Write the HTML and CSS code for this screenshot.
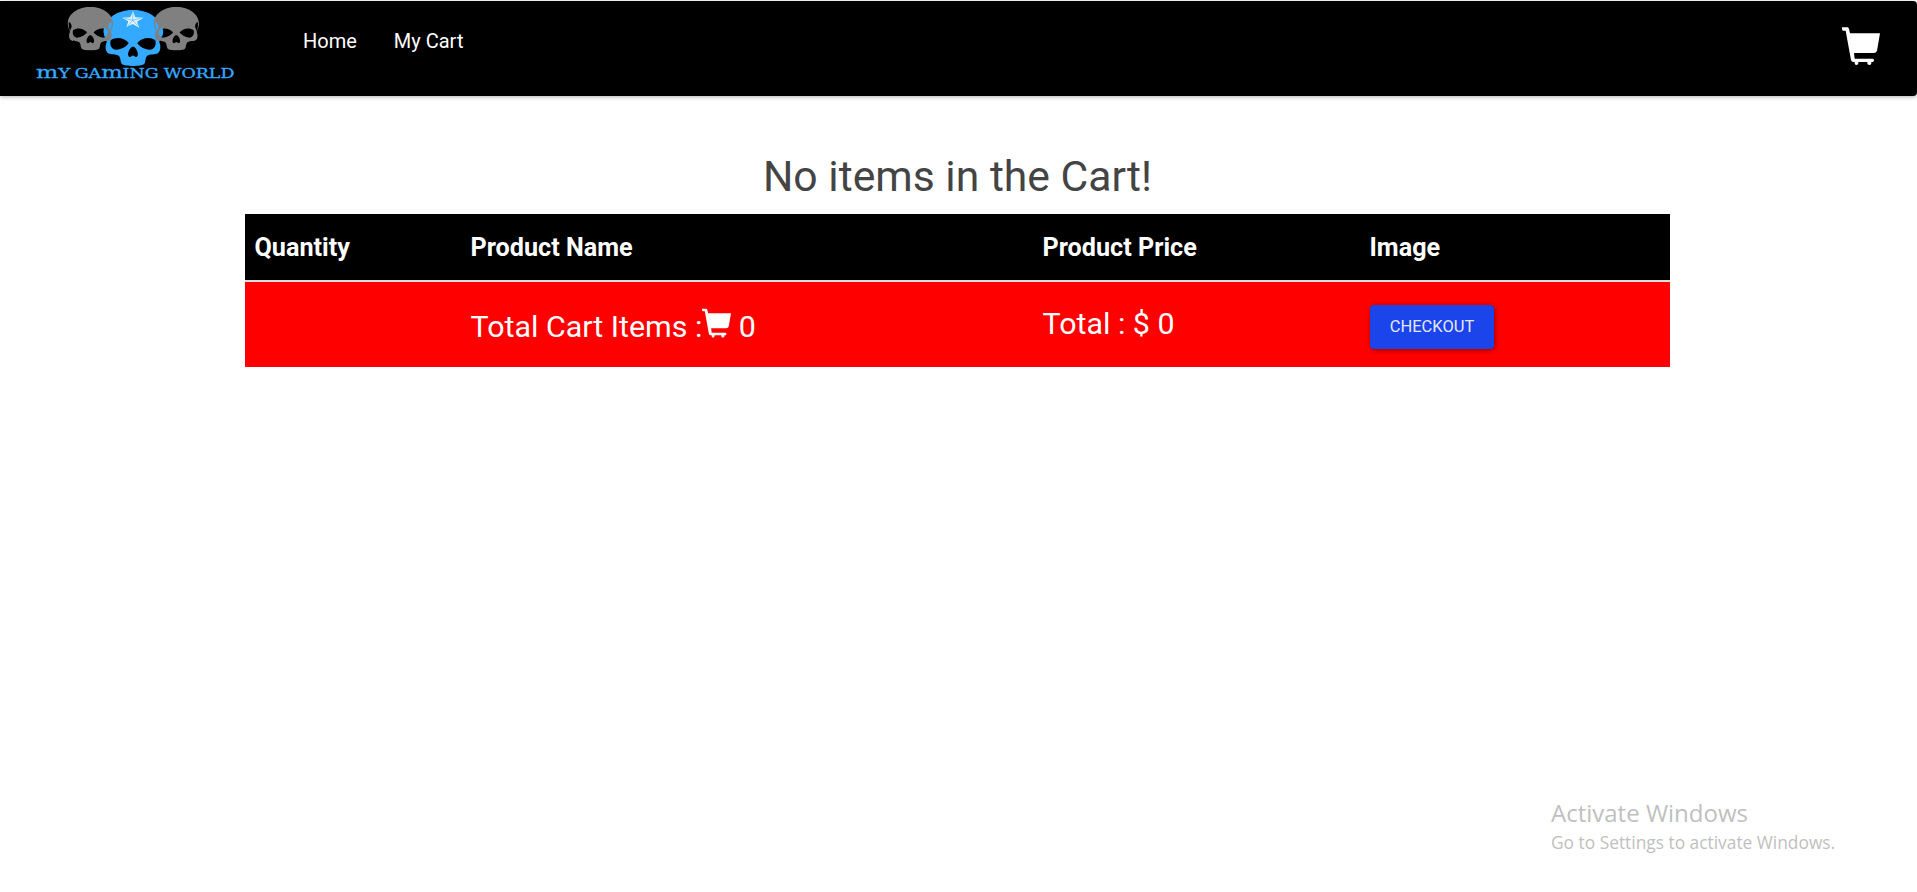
FILE: index.html
```
<!DOCTYPE html>
<html lang="en">
<head>
<meta charset="utf-8">
<title>My Gaming World</title>
<link rel="stylesheet" href="styles.css">
</head>
<body>
<svg class="defs" aria-hidden="true">
  <symbol id="cart" viewBox="0 0 114 114">
    <path d="M0 1 H16 Q20 1 21 6 L24 19 H114 L105 71 Q103 78 95 78 H36 L38 95 H92 Q96 95 96 100 Q96 105 92 105 H88 V109 Q88 114 82 114 Q76 114 76 109 V105 H49 V109 Q49 114 43 114 Q38 114 38 109 V105 H33 Q28 104 27 99 L11 11 H3 Q0 10 0 5 Z"/>
  </symbol>
  <symbol id="skull" viewBox="0 0 138 132">
    <path fill-rule="evenodd" d="M69 1 C105 0 137 22 137 51 C137 60 132 67 130 75 C134 84 134 95 127 101 C119 105 109 102 102 107 C97 112 99 121 95 126 C88 132 50 132 43 126 C39 121 41 112 36 107 C29 102 19 105 11 101 C4 95 4 84 8 75 C6 67 1 60 1 51 C1 22 33 0 69 1 Z
      M17 71 C14 83 20 93 30 93 C43 92 55 84 59 77 C48 65 30 62 17 71 Z
      M121 71 C124 83 118 93 108 93 C95 92 83 84 79 77 C90 65 108 62 121 71 Z
      M67 86 C58 92 55 106 60 109 C64 111 66 106 69 106 C72 106 74 111 78 109 C83 106 80 92 71 86 Z"/>
  </symbol>
</svg>
<nav class="navbar">
  <a class="brand" href="#">
    <svg class="logo" viewBox="0 0 720 285">
      <g fill="#33aaff">
        <svg x="250" y="29" width="178" height="171" viewBox="0 0 138 132" preserveAspectRatio="none"><use href="#skull" width="138" height="132"/></svg>
      </g>
      <g fill="#808080">
        <use href="#skull" x="142" y="20" width="138" height="132"/>
        <use href="#skull" x="400" y="20" width="138" height="132"/>
      </g>
      <g fill="#000">
        <path d="M146 66 Q154 68 155 80 L150 93 Q145 80 146 66Z"/>
        <path d="M534 66 Q526 68 525 80 L530 93 Q535 80 534 66Z"/>
        <path d="M274 66 Q266 68 265 80 L268 92 Q277 80 274 66Z" fill="#33aaff"/>
        <path d="M404 66 Q414 68 415 80 L411 93 Q405 80 404 66Z" fill="#33aaff"/>
      </g>
      <path fill="none" stroke="#33aaff" stroke-width="5" d="M256 83 Q250 96 257 110 M424 83 Q430 96 424 110"/>
      <path fill="#e4f4ff" d="M339 33 L346 52 L370 53 L351 65 L358 83 L338 72 L319 81 L325 64 L306 53 L331 52Z"/>
      <path fill="none" stroke="#33aaff" stroke-width="1.8" d="M338 61 L339 38 M338 61 L362 55 M338 61 L354 78 M338 61 L323 78 M338 61 L314 55"/>
      <text class="logo-text" y="235"><tspan x="48" textLength="103" lengthAdjust="spacingAndGlyphs"><tspan class="round">m</tspan>Y</tspan><tspan x="164" textLength="252" lengthAdjust="spacingAndGlyphs">GA<tspan class="round">m</tspan>ING</tspan><tspan x="431" textLength="212" lengthAdjust="spacingAndGlyphs">WORLD</tspan></text>
    </svg>
  </a>
  <a class="link home" href="#">Home</a>
  <a class="link" href="#">My Cart</a>
  <a class="cart-link" href="#" aria-label="Cart"><svg class="cart-large"><use href="#cart"/></svg></a>
</nav>
<main class="container">
  <h1 class="title"><span>No items in the Cart!</span></h1>
  <div class="row head">
    <div class="cell">Quantity</div><div class="cell">Product Name</div><div class="cell">Product Price</div><div class="cell">Image</div>
  </div>
  <div class="row totals">
    <div class="cell"></div>
    <div class="cell items">Total Cart Items :<svg class="cart-small"><use href="#cart"/></svg> 0</div>
    <div class="cell price">Total : $ 0</div>
    <div class="cell action"><button class="checkout">CHECKOUT</button></div>
  </div>
</main>
<aside class="activation">
  <div class="activation-title">Activate Windows</div>
  <div class="activation-text">Go to Settings to activate Windows.</div>
</aside>
</body>
</html>
```
FILE: styles.css
```
* { box-sizing: border-box; }
body { margin: 0; padding-top: 1px; height: 892px; overflow: hidden; background: #fff; font-family: Roboto, sans-serif; color: #444; }
.defs { position: absolute; width: 0; height: 0; }
.navbar { display: flex; align-items: flex-start; height: 95px; padding-left: 20px; background: #000; border-radius: 0 4px 4px 0; box-shadow: 0 1px 4px rgba(0, 0, 0, .3); }
.brand { width: 240px; height: 95px; }
.logo { display: block; width: 240px; height: 95px; margin-top: -1px; }
.logo-text { font-family: "DejaVu Serif", serif; font-size: 40px; fill: #33aaff; stroke: #33aaff; stroke-width: 1px; }
.round { font-size: 52px; }
.link { color: #fff; text-decoration: none; font-size: 20px; line-height: 26px; margin-top: 27px; }
.home { margin-left: 43px; margin-right: 37px; }
.cart-link { margin: 26px 37px 0 auto; color: #fff; }
.cart-large { display: block; width: 38px; height: 38px; fill: #fff; }
.container { width: 1425px; margin-left: 245px; padding-top: 55px; }
.title { height: 63px; margin: 0; font-size: 42.7px; font-weight: 400; line-height: 50px; text-align: center; }
.row { display: grid; grid-template-columns: 216px 572px 327px 310px; color: #fff; }
.cell { padding-left: 9.5px; }
.head { height: 66px; background: #000; font-size: 25.2px; font-weight: 700; line-height: 68px; }
.totals { height: 87px; border-top: 2px solid #ddd; background: #f00; font-size: 30.4px; white-space: nowrap; }
.items { line-height: 36px; padding-top: 26px; }
.price { line-height: 36px; padding-top: 24px; }
.cart-small { width: 29px; height: 30px; fill: #fff; vertical-align: -1px; }
.action { padding-top: 23px; padding-left: 10px; }
.checkout { display: block; width: 124px; height: 44px; padding: 0 0 1px; border: 0; border-radius: 4px; background: #1c44eb; color: rgba(255, 255, 255, .9); font: 16.5px Roboto, sans-serif; box-shadow: 1px 1px 5px rgba(0, 0, 0, .45); }
.activation { position: absolute; left: 1551px; top: 796px; font-family: "Open Sans", sans-serif; color: #bfbfbf; white-space: nowrap; }
.activation-title { font-size: 24px; line-height: 33px; }
.activation-text { font-size: 17.35px; line-height: 27px; }
```
